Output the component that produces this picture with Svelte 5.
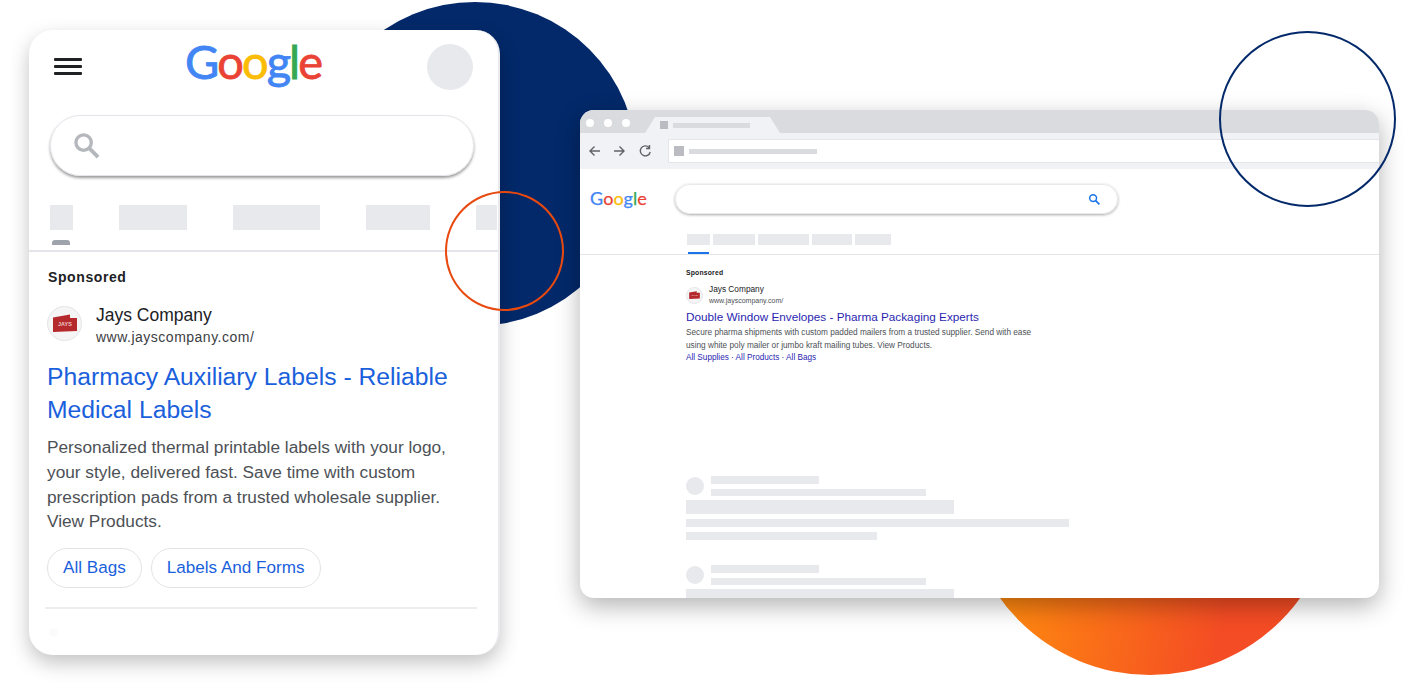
<script>
  const mobileTabs = [
    { w: 23, gap: 46 },
    { w: 68, gap: 46 },
    { w: 87, gap: 46 },
    { w: 64, gap: 46 },
    { w: 21, gap: 0 }
  ];
  const desktopTabs = [23, 42, 51, 40, 36];
  const skeletons = [
    { title: 108, url: 215, head: 268, l1: 383, l2: 191 },
    { title: 108, url: 215, head: 268, l1: 383, l2: 191 }
  ];
</script>

{#snippet logo(cls)}
  <div class="logo {cls}" aria-label="Google">
    <span class="blue">G</span><span class="red">o</span><span class="yellow">o</span><span class="blue">g</span><span class="green">l</span><span class="red">e</span>
  </div>
{/snippet}

{#snippet adIcon(cls)}
  <div class="ad-icon {cls}">
    <svg viewBox="0 0 24 18" aria-hidden="true">
      <path d="M0 3.500 L17 0.500 L17 4 L24 4 L24 17 L0 18 Z" fill="#b5282c" />
      <text x="5" y="11.500" font-size="5.500" font-weight="700" font-family="Liberation Sans" fill="#eec9ca">JAYS</text>
    </svg>
  </div>
{/snippet}

<div class="scene">
  <div class="circle navy"></div>
  <div class="circle sunset"></div>

  <section class="phone">
    <header class="phone-top">
      <div class="burger"><i></i><i></i><i></i></div>
      {@render logo('logo-lg')}
      <div class="avatar"></div>
    </header>

    <div class="phone-search">
      <svg viewBox="0 0 28 28" width="27" height="27" fill="none" stroke="#b4b7bb" aria-hidden="true">
        <circle cx="11" cy="11" r="8" stroke-width="3.500" />
        <path d="M17 17l9 9" stroke-width="4" />
      </svg>
    </div>

    <div class="phone-tabs">
      {#each mobileTabs as t}
        <div class="ph" style="width:{t.w}px;margin-right:{t.gap}px"></div>
      {/each}
    </div>
    <div class="phone-tab-mark"></div>

    <div class="phone-ad">
      <p class="sponsored">Sponsored</p>
      <div class="advertiser">
        {@render adIcon('icon-lg')}
        <div>
          <p class="company">Jays Company</p>
          <p class="site">www.jayscompany.com/</p>
        </div>
      </div>
      <h2>Pharmacy Auxiliary Labels - Reliable Medical Labels</h2>
      <p class="desc">Personalized thermal printable labels with your logo, your style, delivered fast. Save time with custom prescription pads from a trusted wholesale supplier. View Products.</p>
      <div class="chips">
        <span>All Bags</span>
        <span>Labels And Forms</span>
      </div>
      <div class="phone-rule"></div>
      <div class="phone-ghost"></div>
    </div>
  </section>

  <section class="browser">
    <div class="tabstrip">
      <div class="dots"><i></i><i></i><i></i></div>
      <div class="tab">
        <b></b><em></em>
      </div>
    </div>
    <div class="toolbar">
      <svg viewBox="0 0 72 16" width="72" height="16" fill="none" stroke="#5f6368" stroke-width="1.400" aria-hidden="true">
        <path d="M12 8H2M6.500 3.500L2 8l4.500 4.500" />
        <path d="M26 8h10M31.500 3.500L36 8l-4.500 4.500" />
        <path d="M61 4.500A5 5 0 1 0 62.200 9M61.500 2v3.500H58" />
      </svg>
      <div class="address"><b></b><em></em></div>
    </div>

    <div class="results-head">
      {@render logo('logo-sm')}
      <div class="desk-search">
        <svg viewBox="0 0 14 14" width="13" height="13" fill="none" stroke="#1a73e8" aria-hidden="true">
          <circle cx="5.500" cy="5.500" r="3.700" stroke-width="1.600" />
          <path d="M8.300 8.300l4 4" stroke-width="1.800" />
        </svg>
      </div>
    </div>

    <div class="desk-tabs">
      {#each desktopTabs as w}
        <div class="ph" style="width:{w}px"></div>
      {/each}
    </div>
    <div class="desk-rule"><span></span></div>

    <div class="desk-ad">
      <p class="d-sponsored">Sponsored</p>
      <div class="d-advertiser">
        {@render adIcon('icon-sm')}
        <div>
          <p class="d-company">Jays Company</p>
          <p class="d-site">www.jayscompany.com/</p>
        </div>
      </div>
      <h3>Double Window Envelopes - Pharma Packaging Experts</h3>
      <p class="d-desc">Secure pharma shipments with custom padded mailers from a trusted supplier. Send with ease<br />using white poly mailer or jumbo kraft mailing tubes. View Products.</p>
      <p class="d-links">All Supplies · All Products · All Bags</p>
    </div>

    <div class="skeletons">
      {#each skeletons as s}
        <div class="skel">
          <div class="skel-top">
            <div class="skel-dot"></div>
            <div class="skel-lines">
              <div class="ph bar" style="width:{s.title}px"></div>
              <div class="ph bar url" style="width:{s.url}px"></div>
            </div>
          </div>
          <div class="ph head" style="width:{s.head}px"></div>
          <div class="ph bar" style="width:{s.l1}px"></div>
          <div class="ph bar" style="width:{s.l2}px"></div>
        </div>
      {/each}
    </div>
  </section>

  <div class="ring ring-orange"></div>
  <div class="ring ring-navy"></div>
</div>

<style>
  :global(body) {
    margin: 0;
    background: #fff;
  }

  p, h2, h3 {
    margin: 0;
    font-weight: 400;
  }

  .scene {
    position: relative;
    width: 1409px;
    height: 695px;
    overflow: hidden;
    font-family: "Liberation Sans", Arial, sans-serif;
  }

  .circle, .ring {
    position: absolute;
    border-radius: 50%;
    box-sizing: border-box;
  }

  .navy {
    left: 313px;
    top: 2px;
    width: 324px;
    height: 324px;
    background: #03296a;
  }

  .sunset {
    left: 965px;
    top: 305px;
    width: 370px;
    height: 370px;
    background: linear-gradient(100deg, #ff8c0e 18%, #f44c24 72%);
  }

  .ring-orange {
    left: 445px;
    top: 191px;
    width: 119px;
    height: 120px;
    border: 2px solid #e8490f;
  }

  .ring-navy {
    left: 1219px;
    top: 31px;
    width: 177px;
    height: 176px;
    border: 2px solid #03296a;
  }

  .ph {
    background: #e8e9ed;
  }

  /* phone card */
  .phone {
    position: absolute;
    left: 29px;
    top: 30px;
    width: 471px;
    height: 625px;
    box-sizing: border-box;
    background: #fff;
    border-radius: 24px;
    border-right: 2px solid #e9eaee;
    box-shadow: 0 8px 20px rgba(0, 0, 0, 0.24);
    overflow: hidden;
  }

  .phone-top {
    display: flex;
    align-items: flex-start;
    justify-content: space-between;
    padding: 14px 25px 0 25px;
    height: 71px;
    box-sizing: border-box;
  }

  .burger {
    display: flex;
    flex-direction: column;
    gap: 4.500px;
    margin-top: 14px;
    width: 28px;
  }

  .burger i {
    display: block;
    height: 2.500px;
    background: #202124;
    border-radius: 1px;
  }

  .avatar {
    width: 46px;
    height: 46px;
    border-radius: 50%;
    background: #e8e9ed;
  }

  .logo {
    display: flex;
    font-family: Lato, sans-serif;
    font-weight: 400;
    line-height: 1;
  }

  .logo-lg {
    font-size: 47px;
    letter-spacing: -2px;
    -webkit-text-stroke: 0.800px;
    margin: -6px 0 0 -3px;
  }

  .logo-sm {
    font-size: 18px;
    width: 85px;
    -webkit-text-stroke: 0.250px;
    margin-top: -3px;
  }

  .blue { color: #4285f4; }
  .red { color: #ea4335; }
  .yellow { color: #fbbc05; }
  .green { color: #34a853; }

  .phone-search {
    display: flex;
    align-items: center;
    box-sizing: border-box;
    margin: 14px 24px 0 21px;
    height: 61px;
    padding-left: 22px;
    border-radius: 31px;
    border: 1px solid #e4e5ea;
    box-shadow: 0 2px 3px rgba(0, 0, 0, 0.4);
  }

  .phone-tabs {
    display: flex;
    margin: 29px 0 0 21px;
  }

  .phone-tabs .ph {
    flex: none;
    height: 25px;
  }

  .phone-tab-mark {
    width: 18px;
    height: 5px;
    margin: 10px 0 5px 23px;
    background: #9fa3ab;
    border-radius: 3px 3px 0 0;
  }

  .phone-ad {
    border-top: 2px solid #e4e5ea;
    padding: 17px 19px 0 18px;
  }

  .sponsored {
    font-size: 14px;
    font-weight: 700;
    letter-spacing: 0.600px;
    color: #202124;
    line-height: 16px;
    padding-left: 1px;
  }

  .advertiser {
    display: flex;
    align-items: center;
    gap: 14px;
    margin-top: 18px;
  }

  .company {
    font-size: 17.500px;
    line-height: 24px;
    color: #202124;
  }

  .site {
    font-size: 14px;
    line-height: 20px;
    color: #3c4043;
    letter-spacing: 0.500px;
  }

  .ad-icon {
    flex: none;
    display: flex;
    align-items: center;
    justify-content: center;
    border-radius: 50%;
    background: #f5f5f6;
    border: 1px solid #e4e5e8;
    box-sizing: border-box;
  }

  .ad-icon svg {
    display: block;
  }

  .icon-lg {
    width: 35px;
    height: 35px;
    margin-top: -4px;
  }

  .icon-lg svg {
    width: 24px;
    height: 18px;
  }

  .icon-sm {
    width: 17px;
    height: 17px;
  }

  .icon-sm svg {
    width: 11px;
    height: 8px;
  }

  h2 {
    margin-top: 13px;
    width: 420px;
    font-size: 24.700px;
    line-height: 33px;
    color: #1a5fdc;
  }

  .desc {
    margin-top: 9px;
    width: 410px;
    font-size: 17.250px;
    line-height: 24.800px;
    color: #4d5156;
  }

  .chips {
    display: flex;
    gap: 9px;
    margin-top: 14px;
  }

  .chips span {
    box-sizing: border-box;
    height: 40px;
    padding: 0 15px;
    display: flex;
    align-items: center;
    font-size: 17.100px;
    color: #1a5fdc;
    border: 1.500px solid #e2e3e6;
    border-radius: 20px;
  }

  .phone-rule {
    height: 2px;
    margin: 19px 0 0 -2px;
    width: 432px;
    background: #eceded;
  }

  .phone-ghost {
    width: 9px;
    height: 9px;
    margin: 19px 0 0 2px;
    border-radius: 50%;
    background: #fbfbfc;
  }

  /* browser window */
  .browser {
    position: absolute;
    left: 580px;
    top: 110px;
    width: 799px;
    height: 488px;
    background: #fff;
    border-radius: 14px;
    box-shadow: 0 8px 25px rgba(0, 0, 0, 0.3);
    overflow: hidden;
  }

  .tabstrip {
    display: flex;
    align-items: flex-end;
    height: 23px;
    background: #dadbdf;
  }

  .dots {
    display: flex;
    gap: 10px;
    align-self: center;
    padding: 2px 0 0 6px;
    width: 60px;
    box-sizing: border-box;
  }

  .dots i {
    width: 8px;
    height: 8px;
    border-radius: 50%;
    background: #fff;
  }

  .tab {
    display: flex;
    align-items: center;
    gap: 5px;
    box-sizing: border-box;
    width: 135px;
    height: 16px;
    margin-left: 5px;
    padding-left: 15px;
    background: #f1f2f5;
    clip-path: polygon(0 100%, 10px 0, 125px 0, 135px 100%);
  }

  .tab b {
    width: 8px;
    height: 8px;
    background: #babcc1;
  }

  .tab em {
    width: 77px;
    height: 5px;
    background: #dadbdf;
  }

  .toolbar {
    display: flex;
    align-items: center;
    gap: 8px;
    height: 36px;
    padding: 0 0 0 8px;
    background: #f1f2f5;
  }

  .address {
    display: flex;
    flex: 1;
    align-items: center;
    gap: 5px;
    height: 22px;
    padding-left: 5px;
    background: #fff;
    border: 1px solid #e4e5e8;
    border-right: 0;
  }

  .address b {
    width: 10px;
    height: 10px;
    background: #babcc1;
  }

  .address em {
    width: 128px;
    height: 5px;
    background: #dadbdf;
  }

  .results-head {
    display: flex;
    align-items: center;
    padding: 15px 0 0 10px;
  }

  .desk-search {
    display: flex;
    align-items: center;
    justify-content: flex-end;
    box-sizing: border-box;
    width: 443px;
    height: 30px;
    padding-right: 16px;
    border-radius: 15px;
    border: 1px solid #e8e9ed;
    box-shadow: 0 1px 3px rgba(0, 0, 0, 0.35);
  }

  .desk-tabs {
    display: flex;
    gap: 3px;
    margin: 20px 0 0 107px;
  }

  .desk-tabs .ph {
    height: 11px;
  }

  .desk-rule {
    height: 1px;
    margin-top: 9px;
    background: #e4e5e8;
    position: relative;
  }

  .desk-rule span {
    position: absolute;
    left: 108px;
    top: -2px;
    width: 21px;
    height: 2px;
    background: #1a73e8;
  }

  .desk-ad {
    padding: 13px 0 0 106px;
  }

  .d-sponsored {
    font-size: 6.800px;
    font-weight: 700;
    line-height: 10px;
    color: #202124;
    letter-spacing: 0.200px;
  }

  .d-advertiser {
    display: flex;
    align-items: center;
    gap: 6px;
    margin-top: 5px;
  }

  .d-company {
    font-size: 8.300px;
    line-height: 12px;
    color: #202124;
  }

  .d-site {
    font-size: 7px;
    line-height: 12px;
    color: #4d5156;
  }

  h3 {
    margin-top: 2px;
    font-size: 11.740px;
    line-height: 16px;
    color: #2a1fb0;
  }

  .d-desc {
    margin-top: 2px;
    font-size: 8.240px;
    line-height: 12.700px;
    color: #4d5156;
  }

  .d-links {
    font-size: 8.200px;
    line-height: 12.700px;
    color: #2a1fb0;
  }

  .skeletons {
    display: flex;
    flex-direction: column;
    gap: 25px;
    margin: 111px 0 0 106px;
  }

  .skel {
    display: flex;
    flex-direction: column;
    gap: 5px;
  }

  .skel-top {
    display: flex;
    align-items: center;
    gap: 7px;
    margin-bottom: -1px;
  }

  .skel-dot {
    width: 18px;
    height: 18px;
    border-radius: 50%;
    background: #e8e9ed;
  }

  .skel-lines {
    display: flex;
    flex-direction: column;
    gap: 5px;
  }

  .bar {
    height: 8px;
  }

  .url {
    height: 7px;
  }

  .head {
    height: 14px;
  }
</style>
